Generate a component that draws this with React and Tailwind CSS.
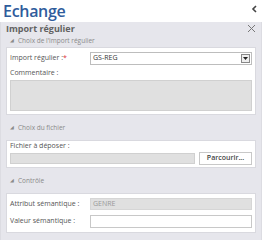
export default function App() {
  return (
    <div className="w-[262px] h-[240px] overflow-hidden bg-white font-['Open_Sans',sans-serif]">
      {/* Title */}
      <div className="h-[22px] flex items-start justify-between pl-[3px] pr-[4px]">
        <span className="text-[16px] leading-[22px] font-semibold tracking-[-0.3px] text-[#2f5c9c]">Echange</span>
        <svg width="6" height="8" viewBox="0 0 6 8" className="mr-[1px] mt-[5px]">
          <path d="M5 1 L2 4 L5 7" stroke="#444" strokeWidth="1.6" fill="none" />
        </svg>
      </div>

      {/* Panel */}
      <div className="bg-[#e6e6ec] h-[218px] px-[5px] border-l border-r border-[#dcdce2]">
        <div className="h-[13px] flex items-center justify-between">
          <span className="text-[9px] font-bold text-[#626262]">Import régulier</span>
          <svg width="9" height="9" viewBox="0 0 9 9">
            <path d="M1 1 L8 8 M8 1 L1 8" stroke="#777" strokeWidth="1" fill="none" />
          </svg>
        </div>

        <div className="h-[12px] flex items-center pl-[4px] gap-[4px] text-[6.5px] text-[#8a8a8a]">
          <span className="text-[5px]">◢</span>
          <span>Choix de l'import régulier</span>
        </div>

        <div className="bg-white border border-[#d9d9df] px-[3px] pt-[2px] pb-[3px]">
          <div className="flex items-center h-[16px]">
            <span className="w-[80px] text-[7px] text-[#555]">
              Import régulier :<span className="text-[#d33]">*</span>
            </span>
            <div className="flex-1 h-[13px] border border-[#bdbdbd] flex items-center justify-between pl-[2px] pr-[1px]">
              <span className="text-[7px] text-[#333]">GS-REG</span>
              <div className="w-[9px] h-[9px] border border-[#888] bg-[#eee] flex items-center justify-center">
                <svg width="5" height="3" viewBox="0 0 5 3">
                  <path d="M0 0 L5 0 L2.5 3 Z" fill="#222" />
                </svg>
              </div>
            </div>
          </div>
          <div className="h-[14px] flex items-center text-[7px] text-[#555]">Commentaire :</div>
          <div className="h-[31px] bg-[#e0e0e0] border border-[#d0d0d0]" />
        </div>

        <div className="h-[25px] flex items-center pl-[4px] gap-[4px] text-[6.5px] text-[#8a8a8a]">
          <span className="text-[5px]">◢</span>
          <span>Choix du fichier</span>
        </div>

        <div className="bg-white border border-[#d9d9df] px-[3px] pt-[0px] pb-[2px]">
          <div className="h-[11px] flex items-center text-[7px] text-[#555]">Fichier à déposer :</div>
          <div className="flex items-center gap-[4px]">
            <div className="flex-1 h-[11px] bg-[#e0e0e0] border border-[#d0d0d0]" />
            <div className="w-[53px] h-[13px] border border-[#c8c8c8] bg-white flex items-center justify-center text-[7px] text-[#444] font-semibold">
              Parcourir...
            </div>
          </div>
        </div>

        <div className="h-[25px] flex items-center pl-[4px] gap-[4px] text-[6.5px] text-[#8a8a8a]">
          <span className="text-[5px]">◢</span>
          <span>Contrôle</span>
        </div>

        <div className="bg-white border border-[#d9d9df] px-[3px] py-[4px] flex flex-col gap-[5px]">
          <div className="flex items-center">
            <span className="w-[80px] text-[7px] text-[#555]">Attribut sémantique :</span>
            <div className="flex-1 h-[12px] bg-[#e0e0e0] border border-[#d6d6d6] flex items-center pl-[2px] text-[7px] text-[#999]">
              GENRE
            </div>
          </div>
          <div className="flex items-center">
            <span className="w-[80px] text-[7px] text-[#555]">Valeur sémantique :</span>
            <div className="flex-1 h-[13px] bg-white border border-[#c8c8c8]" />
          </div>
        </div>
      </div>
    </div>
  )
}
